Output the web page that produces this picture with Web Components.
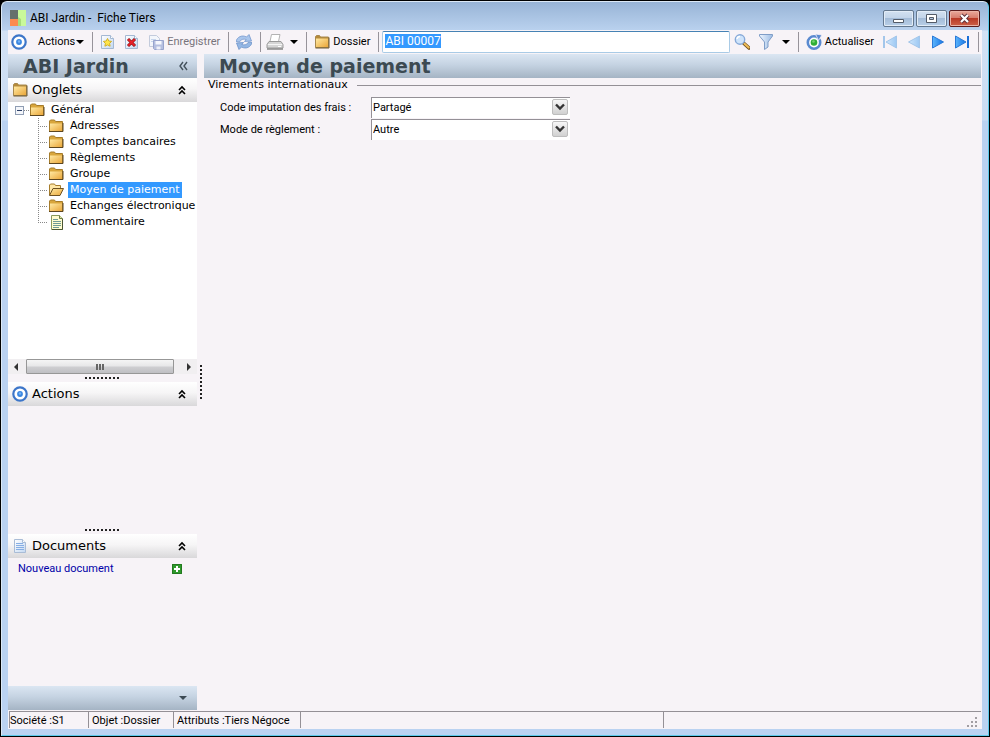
<!DOCTYPE html>
<html lang="fr">
<head>
<meta charset="utf-8">
<title>ABI Jardin - Fiche Tiers</title>
<style>
    body {
        margin: 0;
        background: #000;
        color: #000;
        font: 11px/14px Roboto, "Liberation Sans", Arial, sans-serif;
        --panel: #f7f3f7;
        --bar: linear-gradient(#dbe6f2, #c5d3e2 45%, #a5b4c4);
        --verdana: "DejaVu Sans", Verdana, sans-serif;
    }
</style>
</head>
<body>
<app-window>
    <title-bar slot="title" text="ABI Jardin -  Fiche Tiers"></title-bar>
    <tool-bar slot="toolbar"></tool-bar>
    <side-bar slot="side" heading="ABI Jardin">
        <side-panel heading="Onglets" icon="folder" style="flex-grow: 296">
            <tree-view></tree-view>
        </side-panel>
        <drag-grip></drag-grip>
        <side-panel heading="Actions" icon="target" style="flex-grow: 144"></side-panel>
        <drag-grip></drag-grip>
        <side-panel heading="Documents" icon="document" style="flex-grow: 152">
            <doc-link>Nouveau document</doc-link>
        </side-panel>
    </side-bar>
    <drag-grip slot="splitter" vertical></drag-grip>
    <main-view slot="main" heading="Moyen de paiement">
        <field-group legend="Virements internationaux">
            <combo-field label="Code imputation des frais :" value="Partagé"></combo-field>
            <combo-field label="Mode de règlement :" value="Autre"></combo-field>
        </field-group>
    </main-view>
    <status-bar slot="status"></status-bar>
</app-window>

<script>
const FOLDER_GRAD = `<defs><linearGradient id="f" x2="1" y2="1"><stop stop-color="#ffe9a3"/><stop offset="1" stop-color="#eaa73a"/></linearGradient></defs>`;

const PAGE_GRAD = `<defs><linearGradient id="p" x2="1" y2="1"><stop stop-color="#fff"/><stop offset="1" stop-color="#c3d8f2"/></linearGradient></defs>`;

const BLUE_GRAD = `<defs><linearGradient id="b" x2="1"><stop stop-color="#5cb4fb"/><stop offset="1" stop-color="#1676e6"/></linearGradient></defs>`;
const PALE_GRAD = `<defs><linearGradient id="b" x2="1"><stop stop-color="#cfe6fb"/><stop offset="1" stop-color="#9dc8f3"/></linearGradient></defs>`;

const ICONS = {
    target: `<circle cx="8" cy="8" r="6.700" fill="#fff" stroke="#3d76c9" stroke-width="2.200"/><circle cx="8" cy="8" r="2.900" fill="#3a86e0"/><circle cx="8" cy="7.500" r="1.200" fill="#75b2f3"/>`,
    folder: `${FOLDER_GRAD}
        <path d="M1.500 13.500V2.500l1-1h3l1 1.500h8v10.500z" fill="#b58a3a" stroke="#a8894e"/>
        <path d="M2 4.500h12V13H2z" fill="url(#f)"/>
        <path d="M1.500 14h13.500V3.500" fill="none" stroke="#6f5a34"/>`,
    treeFolder: `${FOLDER_GRAD}
        <path d="M1.500 4V3l1-1h4l1 1.500h7v10h-13z" fill="#d9a63c" stroke="#a67c2b"/>
        <path d="M2 5.500h12V13H2z" fill="url(#f)"/>
        <path d="M1 13.500h14V5" fill="none" stroke="#5c4620"/>`,
    treeOpen: `${FOLDER_GRAD}
        <path d="M1.500 13V3l1-1h4l1 1.500h5V6" fill="#ffe7a6" stroke="#a67c2b"/>
        <path d="M1.500 13.500 5 6.500h10.500l-3.500 7z" fill="url(#f)" stroke="#6e5222"/>`,
    treeNote: `
        <path d="M3.500 1.500h8l3 3v11h-11z" fill="#fffdd0" stroke="#8a9a5b"/>
        <path d="M11.500 1.500v3h3" fill="#dfe8a8" stroke="#6c7b46"/>
        <path d="M5 5.500h5M5 7.500h8M5 9.500h8M5 11.500h8M5 13.500h6" stroke="#6f9b96"/>
        <path d="M14.500 5v10.500H4" fill="none" stroke="#4b5634"/>`,
    document: `${PAGE_GRAD}
        <path d="M2.500 1.500h8l3 3v10h-11z" fill="url(#p)" stroke="#a9bcd6"/>
        <path d="M10.500 1.500v3h3" fill="#fff" stroke="#a9bcd6"/>
        <path d="M4 5.500h7M4 7.500h8M4 9.500h8M4 11.500h8" stroke="#86aee4"/>`,
    newPage: `${PAGE_GRAD}
        <path d="M1.500 1.500h9l3 3v10h-12z" fill="url(#p)" stroke="#a4b8d3"/>
        <path d="M10.500 1.500v3h3" fill="#fff" stroke="#a4b8d3"/>
        <path d="m7.500 4.500 1.300 2.500 2.800.4-2 2 .5 2.800-2.600-1.300-2.600 1.300.5-2.800-2-2 2.800-.4z" fill="#ffe64a" stroke="#d3b12a"/>`,
    deletePage: `${PAGE_GRAD}
        <path d="M1.500 1.500h9l3 3v10h-12z" fill="url(#p)" stroke="#a4b8d3"/>
        <path d="M10.500 1.500v3h3" fill="#fff" stroke="#a4b8d3"/>
        <path d="m4 5 7 7m0-7-7 7" stroke="#8c0f0f" stroke-width="3"/>
        <path d="m4.300 5.300 6.400 6.400m0-6.400-6.400 6.400" stroke="#e8222a" stroke-width="1.800"/>`,
    save: `
        <path d="M1.500 1.500h7l3 3v8h-10z" fill="#f3f6fb" stroke="#c3cbdc"/>
        <path d="M3 5.500h5M3 7.500h4" stroke="#c5d4ec"/>
        <path d="M5.500 6.500h10v9h-9l-1-1z" fill="#b5bfe0" stroke="#98a4cd"/>
        <path d="M7.500 7h6v3.500h-6z" fill="#f5f7fd"/><path d="M8.500 12.500h4v3h-4z" fill="#eef0f8"/>`,
    sync: `
        <path d="M0 7.500C1 3 6 .5 10.500 3L13 .5 15.500 7 8.500 7.500l1.700-2C7.500 4.500 4.500 5.500 3.500 8z" fill="#a9c6ec" stroke="#7598cd" stroke-width=".8"/>
        <path d="M16 8.500c-1 4.500-6 7-10.500 4.500L3 15.500.5 9l7-.5-1.700 2c2.700 1 5.700 0 6.700-2.500z" fill="#94b7e4" stroke="#6d93c9" stroke-width=".8"/>`,
    printer: `
        <path d="M5.500.5h8.500l-1.500 7H4z" fill="#fff" stroke="#b3b3b3"/>
        <path d="M3 7.500h12l2 3v3.500H1v-3.500z" fill="#d5d5d5" stroke="#9a9a9a"/>
        <path d="M2 10.500h14" stroke="#f5f5f5"/><path d="M1 15h16" stroke="#888" stroke-width="1.500"/>
        <path d="M12 12.500h3" stroke="#fff"/>`,
    search: `
        <path d="m10 9.500 5 4.500" stroke="#74521c" stroke-width="3.600" stroke-linecap="round"/>
        <path d="m10.500 9.700 4.200 3.900" stroke="#eebc58" stroke-width="2" stroke-linecap="round"/>
        <circle cx="6" cy="5.500" r="4.700" fill="#cfe4fb" stroke="#86a9d8" stroke-width="1.400"/>
        <path d="M3 5a3 3 0 0 1 3-2.500" stroke="#fff" stroke-width="1.400" fill="none"/>`,
    filter: `
        <defs><linearGradient id="g" x2="1"><stop stop-color="#edf5fe"/><stop offset="1" stop-color="#9bbbe4"/></linearGradient></defs>
        <path d="M1.500.5h13v1.500L10 8v5l-3.500 2.500V8l-5-6z" fill="url(#g)" stroke="#7f9dc7"/>`,
    reload: `
        <circle cx="8" cy="8.500" r="6.200" fill="#fff" stroke="#5a8ad0" stroke-width="2.600"/>
        <path d="M9.500 0 16 1l-3.500 5.500z" fill="#5a8ad0" stroke="#f7f3f7" stroke-width=".8"/>
        <circle cx="8" cy="8.500" r="3.300" fill="#2fae35"/><circle cx="7.500" cy="7.500" r="1.300" fill="#75d36f"/>`,
    first: `${PALE_GRAD}<path d="M2 2v12" stroke="#a3c6ea" stroke-width="2"/><path d="M14.500 2v12L4 8z" fill="url(#b)" stroke="#a3c6ea"/>`,
    prev: `${PALE_GRAD}<path d="M13.500 2v12L2.500 8z" fill="url(#b)" stroke="#a3c6ea"/>`,
    next: `${BLUE_GRAD}<path d="M2.500 2v12L13.500 8z" fill="url(#b)" stroke="#2a7ad8"/>`,
    last: `${BLUE_GRAD}<path d="M14 2v12" stroke="#1c6fd6" stroke-width="2"/><path d="M1.500 2v12L12 8z" fill="url(#b)" stroke="#2a7ad8"/>`,
    caret: `<path d="M0 6h8L4 10z" fill="#000"/>`,
    caretGrey: `<path d="M0 6h8L4 10z" fill="#3c4a54"/>`,
    chevrons: `<path d="m5 8 3-3 3 3M5 12l3-3 3 3" fill="none" stroke="#000" stroke-width="1.600"/>`,
    collapse: `<path d="M8 4 5 8l3 4M12 4 9 8l3 4" fill="none" stroke="#43515b" stroke-width="1.400"/>`,
    plus: `<path d="M3 3h10v10H3z" fill="#2f9a2c"/><path d="M3.500 3.500h9v9h-9z" fill="none" stroke="#23781f"/><path d="M8 5v6M5 8h6" stroke="#fff" stroke-width="2"/>`,
    arrowLeft: `<path d="M6 4v8L2 8z" fill="#333"/>`,
    arrowRight: `<path d="M2 4v8l4-4z" fill="#333"/>`,
    logo: `<path d="M0 0h8v9H0z" fill="#66706b"/><path d="M0 9h8v7H0z" fill="#fb8b4e"/><path d="M8 0h8v16H8z" fill="#c9f99a"/><path d="M8 7v9h3V9z" fill="#a8dd7c"/>`
};
const WIDTHS = { printer: 18, caret: 8, caretGrey: 8, arrowLeft: 8, arrowRight: 8 };

function define(name, render, after) {
    customElements.define(name, class extends HTMLElement {
        constructor() {
            super();
            this.attachShadow({mode: 'open'});
        }

        connectedCallback() {
            this.shadowRoot.innerHTML = render(this);
            if (after) after(this.shadowRoot);
        }
    });
}

define('app-icon', el => {
    const name = el.getAttribute('name');
    const w = WIDTHS[name] || 16;
    return `
        <style>
            :host { display: block; flex: none; }
            svg { display: block; }
        </style>
        <svg width="${w}" height="16" viewBox="0 0 ${w} 16" aria-hidden="true">${ICONS[name]}</svg>`;
});

define('app-window', () => `
    <style>
        :host {
            display: flex;
            flex-direction: column;
            min-height: calc(100vh - 2px);
            box-sizing: border-box;
            margin: 1px;
            border: 1px solid;
            border-color: #dce9f6 #5cc9ea #5cc9ea #dce9f6;
            border-radius: 6px 6px 0 0;
            padding: 0 6px 6px;
            background: linear-gradient(#98b4d6, #b9d1ee 28px, #d2e1f4 29px, #c9dcf3 118px, #bad2f1 119px);
        }
        .client {
            flex: 1;
            display: flex;
            flex-direction: column;
            background: var(--panel);
        }
        .body {
            flex: 1;
            display: flex;
        }
        ::slotted([slot=side]) { flex: none; width: 189px; }
        ::slotted([slot=main]) { flex: 1; min-width: 0; }
    </style>
    <slot name="title"></slot>
    <div class="client">
        <slot name="toolbar"></slot>
        <div class="body">
            <slot name="side"></slot>
            <slot name="splitter"></slot>
            <slot name="main"></slot>
        </div>
        <slot name="status"></slot>
    </div>`);

define('title-bar', el => `
    <style>
        :host {
            display: flex;
            align-items: center;
            height: 28px;
            padding: 4px 2px 0;
            box-sizing: border-box;
        }
        .text {
            flex: 1;
            margin-left: 4px;
            font-size: 12px;
            white-space: pre;
        }
        .buttons { display: flex; gap: 2px; }
        button {
            display: block;
            width: 31px;
            height: 17px;
            padding: 0;
            border: 1px solid #64788f;
            border-radius: 2px;
            background: linear-gradient(#d3e1f1, #c2d4e9 48%, #a4bcd8 50%, #b9cfe8);
            box-shadow: inset 0 0 0 1px #e2ecf7;
        }
        button.close {
            border-color: #5b1c1c;
            background: linear-gradient(#e9a99b, #d67b6a 48%, #b93a26 50%, #cc6148);
            box-shadow: inset 0 0 0 1px #eab2a5;
        }
        svg { display: block; margin: auto; }
    </style>
    <app-icon name="logo"></app-icon>
    <span class="text">${el.getAttribute('text')}</span>
    <div class="buttons">
        <button aria-label="Réduire"><svg width="13" height="13"><path d="M1.500 7.500h10v3h-10z" fill="#fff" stroke="#535b68"/></svg></button>
        <button aria-label="Agrandir"><svg width="13" height="13"><path d="M1.500 2.500h10v8h-10z" fill="#fff" stroke="#535b68"/><path d="M4.500 5.500h4v2h-4z" fill="#b2c7df" stroke="#535b68"/></svg></button>
        <button class="close" aria-label="Fermer"><svg width="13" height="13"><path d="m3 3 7 7m0-7-7 7" stroke="#5d3038" stroke-width="4"/><path d="m3 3 7 7m0-7-7 7" stroke="#fff" stroke-width="2.200"/></svg></button>
    </div>`);

define('tool-button', el => {
    const icon = el.getAttribute('icon');
    return `
    <style>
        :host { display: block; flex: none; }
        button {
            display: flex;
            align-items: center;
            height: 24px;
            padding: 0 4px;
            border: 0;
            background: none;
            color: inherit;
            font: inherit;
            white-space: nowrap;
        }
        :host([icon=printer]) button { padding: 0 2px; }
        :host([menu]) button { padding-left: 3px; }
        :host([disabled]) { color: #77737b; }
        ::slotted(span) { margin-left: 3px; }
        :host([menu]) ::slotted(span) { margin: 0 1px 0 11px; }
    </style>
    <button aria-label="${el.getAttribute('label') || el.textContent.trim()}" ${el.hasAttribute('disabled') ? 'disabled' : ''}>
        <app-icon name="${icon}"></app-icon>
        <slot></slot>
        ${el.hasAttribute('menu') ? '<app-icon name="caret"></app-icon>' : ''}
    </button>`;
});

define('tool-bar', () => `
    <style>
        :host {
            display: flex;
            align-items: center;
            height: 24px;
        }
        hr {
            flex: none;
            width: 1px;
            height: 20px;
            margin: 0 3px 0 4px;
            border: 0;
            background: #97939a;
        }
        input {
            flex: 1;
            min-width: 0;
            height: 22px;
            box-sizing: border-box;
            margin: 0;
            padding: 0 2px 3px;
            border: 1px solid #a9cbe6;
            border-top-color: #4682b4;
            border-radius: 2px;
            outline: 0;
            background: #fff;
            font: inherit;
            font-size: 12px;
        }
        input::selection { background: #3399ff; color: #fff; }
    </style>
    <tool-button icon="target" menu><span>Actions</span></tool-button>
    <hr>
    <tool-button icon="newPage" label="Nouveau"></tool-button>
    <tool-button icon="deletePage" label="Supprimer"></tool-button>
    <tool-button icon="save" disabled><span>Enregistrer</span></tool-button>
    <hr>
    <tool-button icon="sync" label="Synchroniser"></tool-button>
    <hr>
    <tool-button icon="printer" label="Imprimer"></tool-button>
    <tool-button icon="caret" label="Options d'impression"></tool-button>
    <hr>
    <tool-button icon="folder"><span>Dossier</span></tool-button>
    <hr>
    <input type="text" value="ABI 00007" aria-label="Dossier">
    <tool-button icon="search" label="Rechercher"></tool-button>
    <tool-button icon="filter" label="Filtrer"></tool-button>
    <tool-button icon="caret" label="Options de filtre"></tool-button>
    <hr>
    <tool-button icon="reload"><span>Actualiser</span></tool-button>
    <tool-button icon="first" label="Premier"></tool-button>
    <tool-button icon="prev" label="Précédent"></tool-button>
    <tool-button icon="next" label="Suivant"></tool-button>
    <tool-button icon="last" label="Dernier"></tool-button>
    <hr>`,
    root => {
        const input = root.querySelector('input');
        input.focus();
        input.select();
    });

const BAR_STYLE = `
    header {
        display: flex;
        align-items: center;
        height: 24px;
        background: var(--bar);
    }
    h1, h2 {
        flex: 1;
        margin: 0 0 0 15px;
        color: #3c4a52;
        font: bold 19px/24px var(--verdana);
        white-space: nowrap;
    }`;

define('side-bar', el => `
    <style>
        :host { display: flex; flex-direction: column; }
        ${BAR_STYLE}
        button { padding: 0; border: 0; background: none; margin-right: 6px; }
        .panels { flex: 1; display: flex; flex-direction: column; }
        footer {
            display: flex;
            align-items: center;
            justify-content: flex-end;
            height: 24px;
            padding-right: 4px;
            background: var(--bar);
        }
    </style>
    <header>
        <h2>${el.getAttribute('heading')}</h2>
        <button aria-label="Replier"><app-icon name="collapse"></app-icon></button>
    </header>
    <div class="panels"><slot></slot></div>
    <footer><button aria-label="Options"><app-icon name="caretGrey"></app-icon></button></footer>`);

define('side-panel', el => `
    <style>
        :host { display: flex; flex-direction: column; flex: 1 1 0; min-height: 0; }
        header {
            display: flex;
            align-items: center;
            flex: none;
            height: 24px;
            padding: 0 7px 0 4px;
            background: linear-gradient(#fff, #f6f5f6 45%, #d9d8da);
        }
        h3 {
            flex: 1;
            margin: 0 0 0 4px;
            font: 13px/24px var(--verdana);
        }
        button { padding: 0; border: 0; background: none; }
        section { flex: 1; display: flex; flex-direction: column; min-height: 0; }
    </style>
    <header>
        <app-icon name="${el.getAttribute('icon')}"></app-icon>
        <h3>${el.getAttribute('heading')}</h3>
        <button aria-label="Réduire ${el.getAttribute('heading')}"><app-icon name="chevrons"></app-icon></button>
    </header>
    <section><slot></slot></section>`);

define('drag-grip', () => `
    <style>
        :host {
            display: flex;
            align-items: center;
            justify-content: center;
            flex: none;
            height: 8px;
        }
        i {
            width: 35px;
            height: 2px;
            background: repeating-linear-gradient(90deg, #222 0 2px, transparent 2px 4px);
        }
        :host([vertical]) { width: 7px; height: auto; }
        :host([vertical]) i {
            width: 2px;
            height: 35px;
            background: repeating-linear-gradient(#222 0 2px, transparent 2px 4px);
        }
    </style>
    <i></i>`);

const TABS = ['Adresses', 'Comptes bancaires', 'Règlements', 'Groupe', 'Moyen de paiement', 'Echanges électronique', 'Commentaire'];

define('tree-node', el => `
    <style>
        :host {
            display: flex;
            align-items: center;
            height: 16px;
            white-space: nowrap;
        }
        .label { margin-left: 4px; padding: 0 2px; line-height: 16px; }
        :host([selected]) .label { background: #3399ff; color: #fff; }
    </style>
    <app-icon name="${el.getAttribute('icon')}"></app-icon>
    <span class="label"><slot></slot></span>`);

define('tree-view', () => `
    <style>
        :host {
            flex: 1;
            display: flex;
            flex-direction: column;
            min-height: 0;
            font: 11px/16px var(--verdana);
        }
        .pane { flex: 1; overflow: hidden; background: #fff; }
        ul { margin: 0; padding: 0; list-style: none; }
        .root { display: flex; align-items: center; padding-left: 7px; }
        .toggle {
            width: 9px;
            height: 9px;
            box-sizing: border-box;
            padding: 0;
            border: 1px solid #8f9db3;
            background: linear-gradient(#2b3f66, #2b3f66) center / 5px 1px no-repeat #f4f6fa;
        }
        .dots {
            width: 5px;
            height: 1px;
            background: repeating-linear-gradient(90deg, #888 0 1px, transparent 1px 2px);
        }
        li li { display: flex; padding-left: 30px; }
        .branch {
            flex: none;
            width: 10px;
            height: 16px;
            background:
                repeating-linear-gradient(#888 0 1px, transparent 1px 2px) 0 0 / 1px 100% no-repeat,
                repeating-linear-gradient(90deg, #888 0 1px, transparent 1px 2px) 0 8px / 100% 1px no-repeat;
        }
        li:last-child > .branch {
            background-size: 1px 8px, 100% 1px;
        }
        .scroll {
            display: flex;
            align-items: center;
            justify-content: space-between;
            gap: 6px;
            height: 15px;
            padding: 0 4px;
            background: #f1eff1;
        }
        .thumb {
            flex: 1;
            display: flex;
            align-items: center;
            justify-content: center;
            height: 13px;
            margin-right: 5px;
            border: 1px solid #979797;
            border-radius: 1px;
            background: linear-gradient(#f5f5f5, #e6e6e8 48%, #cfcfd2 52%, #bfbfc3);
        }
        .thumb i {
            width: 8px;
            height: 6px;
            background: repeating-linear-gradient(90deg, #666 0 2px, transparent 2px 3px);
        }
    </style>
    <div class="pane">
        <ul>
            <li>
                <div class="root"><button class="toggle" aria-label="Replier Général"></button><span class="dots"></span><tree-node icon="treeFolder">Général</tree-node></div>
                <ul>${TABS.map(tab => `
                    <li><span class="branch"></span><tree-node icon="${tab === 'Moyen de paiement' ? 'treeOpen' : tab === 'Commentaire' ? 'treeNote' : 'treeFolder'}" ${tab === 'Moyen de paiement' ? 'selected' : ''}>${tab}</tree-node></li>`).join('')}
                </ul>
            </li>
        </ul>
    </div>
    <div class="scroll">
        <app-icon name="arrowLeft"></app-icon>
        <div class="thumb"><i></i></div>
        <app-icon name="arrowRight"></app-icon>
    </div>`);

define('doc-link', () => `
    <style>
        :host {
            display: flex;
            align-items: center;
            justify-content: space-between;
            height: 22px;
            padding: 0 12px 0 10px;
        }
        a { color: #0000a8; text-decoration: none; }
        button { padding: 0; border: 0; background: none; }
    </style>
    <a href="#nouveau"><slot></slot></a>
    <button aria-label="Ajouter"><app-icon name="plus"></app-icon></button>`);

define('main-view', el => `
    <style>
        :host { display: block; padding-right: 1px; }
        ${BAR_STYLE}
    </style>
    <header><h1>${el.getAttribute('heading')}</h1></header>
    <slot></slot>`);

define('field-group', el => `
    <style>
        :host { display: block; }
        fieldset {
            margin: 0;
            padding: 5px 0 0 16px;
            border: 0;
            border-top: 1px solid #949096;
        }
        legend {
            margin-left: -16px;
            padding: 0 9px 0 4px;
            font: 11px/14px var(--verdana);
        }
    </style>
    <fieldset>
        <legend>${el.getAttribute('legend')}</legend>
        <slot></slot>
    </fieldset>`);

define('combo-field', el => `
    <style>
        :host {
            display: grid;
            grid-template-columns: 151px 199px;
            align-items: center;
            height: 22px;
        }
        .combo { position: relative; align-self: start; }
        select {
            display: block;
            width: 100%;
            height: 21px;
            box-sizing: border-box;
            padding: 0 20px 0 1px;
            border: 0 solid #949096;
            border-width: 1px 0 0 1px;
            border-radius: 0;
            outline: 0;
            background: #fff;
            appearance: none;
            color: #000;
            font: inherit;
        }
        svg {
            position: absolute;
            top: 2px;
            right: 2px;
            pointer-events: none;
        }
    </style>
    <label for="combo">${el.getAttribute('label')}</label>
    <div class="combo">
        <select id="combo"><option>${el.getAttribute('value')}</option></select>
        <svg width="16" height="16">
            <defs><linearGradient id="k" x2="0" y2="1"><stop stop-color="#f8f8f8"/><stop offset="1" stop-color="#cfcfcf"/></linearGradient></defs>
            <rect x=".5" y=".5" width="15" height="15" rx="1.500" fill="url(#k)" stroke="#bdbdbd"/>
            <path d="m4 5.500 4 4 4-4" fill="none" stroke="#333" stroke-width="2.400"/>
        </svg>
    </div>`);

define('status-bar', () => `
    <style>
        :host {
            display: flex;
            height: 19px;
            box-sizing: border-box;
            padding: 1px 1px 0;
        }
        span {
            flex: none;
            box-sizing: border-box;
            height: 17px;
            padding: 2px 0 0 3px;
            border-top: 1px solid #949096;
            border-left: 1px solid #949096;
            white-space: nowrap;
        }
        .company { width: 79px; padding-left: 0; }
        .object { width: 85px; }
        .attributes { width: 127px; }
        .fill { flex: 365 1 0; }
        .grip {
            display: flex;
            justify-content: flex-end;
            flex: 316 1 0;
            padding: 5px 3px 0;
        }
    </style>
    <span class="company">Société :S1</span>
    <span class="object">Objet :Dossier</span>
    <span class="attributes">Attributs :Tiers Négoce</span>
    <span class="fill"></span>
    <span class="grip"><svg width="12" height="11"><path d="M9 0h2v2H9zM5 4h2v2H5zM9 4h2v2H9zM1 8h2v2H1zM5 8h2v2H5zM9 8h2v2H9z" fill="#a29ea3"/></svg></span>`);
</script>
</body>
</html>
